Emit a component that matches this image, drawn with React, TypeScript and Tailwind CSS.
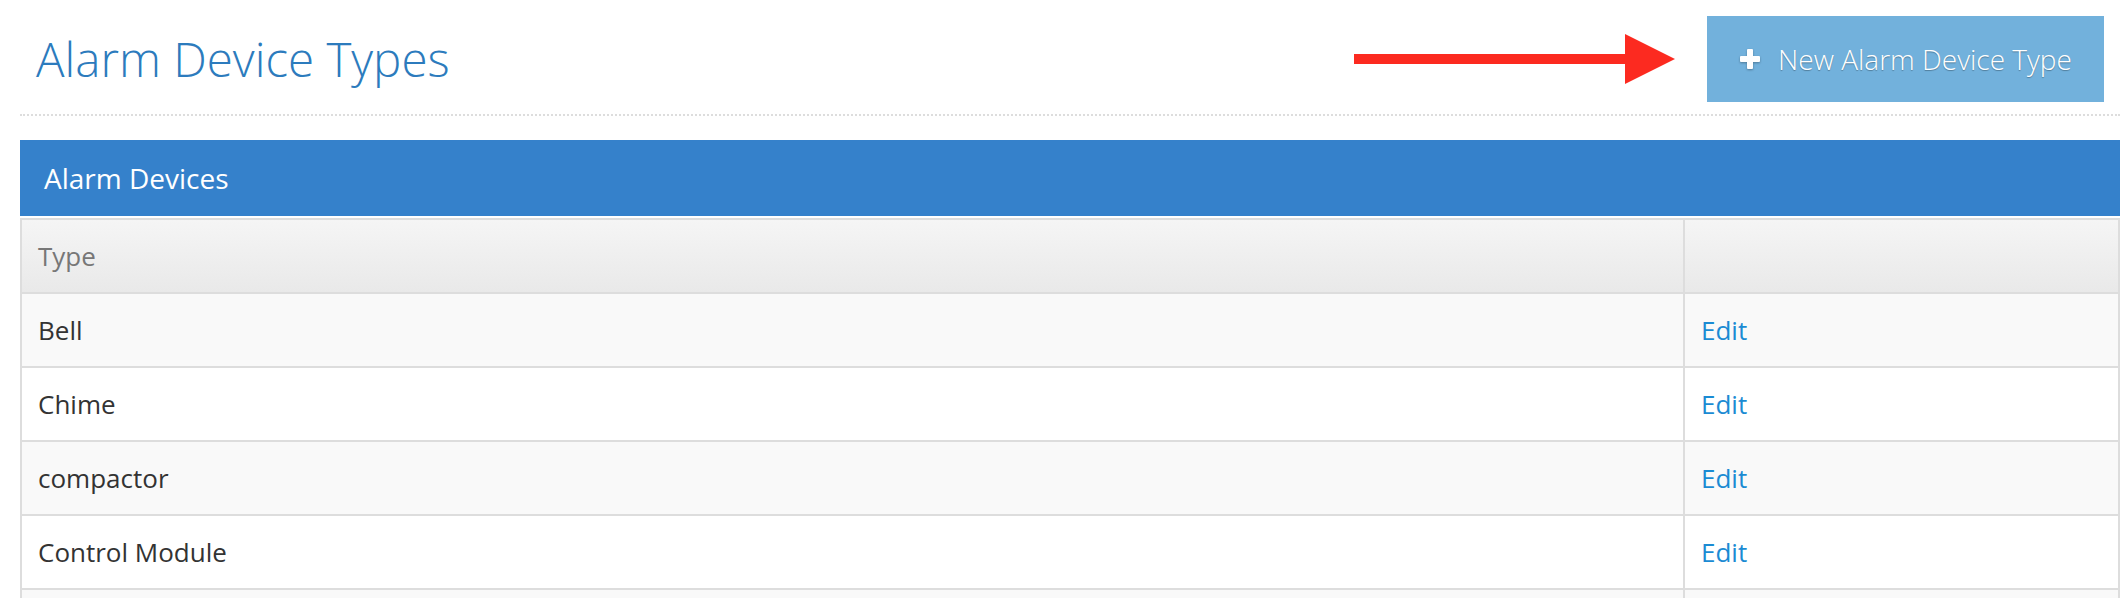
import { useState } from "react";

type DeviceType = {
  id: number;
  name: string;
};

const deviceTypes: DeviceType[] = [
  { id: 1, name: "Bell" },
  { id: 2, name: "Chime" },
  { id: 3, name: "compactor" },
  { id: 4, name: "Control Module" },
  { id: 5, name: "Door Holder" },
];

function PlusIcon() {
  return (
    <svg width="22" height="22" viewBox="0 0 22 22" className="shrink-0 drop-shadow-[0_1px_1px_rgba(0,0,0,0.3)]">
      <rect x="8" y="1" width="6" height="20" rx="1" fill="white" />
      <rect x="1" y="8" width="20" height="6" rx="1" fill="white" />
    </svg>
  );
}

function PointerArrow() {
  return (
    <svg width="322" height="50" viewBox="0 0 322 50" className="shrink-0">
      <rect x="0" y="20" width="274" height="10" fill="#fc2a20" />
      <polygon points="271,0 321,25 271,50" fill="#fc2a20" />
    </svg>
  );
}

export default function App() {
  const [selected, setSelected] = useState<number | null>(null);

  return (
    <div className="h-screen overflow-hidden bg-white pl-[20px] pr-[4px] font-['Open_Sans',sans-serif] text-[#333]">
      <div className="flex items-center justify-between border-b-2 border-dotted border-[#dddddd] pt-[16px] pb-[12px]">
        <h1 className="pl-[16px] text-[47.5px] leading-[50px] font-light text-[#2c7bbd]">
          Alarm Device Types
        </h1>

        <div className="flex items-center gap-[31px] pr-[16px]">
          <PointerArrow />
          <button className="flex h-[86px] w-[397px] items-center justify-center gap-[17px] bg-[#72b1dc] text-[28px] font-light text-white [text-shadow:0_1px_1px_rgba(0,0,0,0.3)]">
            <PlusIcon />
            <span>New Alarm Device Type</span>
          </button>
        </div>
      </div>

      <div className="mt-[24px]">
        <div className="flex h-[76px] items-center bg-[#3581cb] px-[24px] text-[28px] text-white">
          Alarm Devices
        </div>

        <div className="mt-[2px] border-x-2 border-t-2 border-[#dddddd]">
          <div className="grid h-[74px] grid-cols-[1fr_433px] border-b-2 border-[#dddddd] bg-gradient-to-b from-[#f5f5f5] to-[#e9e9e9] text-[26px] text-[#777]">
            <div className="flex items-center border-r-2 border-[#dddddd] px-[16px]">Type</div>
            <div />
          </div>

          {deviceTypes.map((d, i) => (
            <div
              key={d.id}
              className={`grid h-[74px] grid-cols-[1fr_433px] border-b-2 border-[#dddddd] text-[26px] ${
                i % 2 === 0 ? "bg-[#f9f9f9]" : "bg-white"
              }`}
            >
              <div className="flex items-center border-r-2 border-[#dddddd] px-[16px]">{d.name}</div>
              <div className="flex items-center px-[16px]">
                <a
                  href="#"
                  onClick={(e) => {
                    e.preventDefault();
                    setSelected(d.id);
                  }}
                  className={`text-[#1b8bd3] ${selected === d.id ? "underline" : ""}`}
                >
                  Edit
                </a>
              </div>
            </div>
          ))}
        </div>
      </div>
    </div>
  );
}
